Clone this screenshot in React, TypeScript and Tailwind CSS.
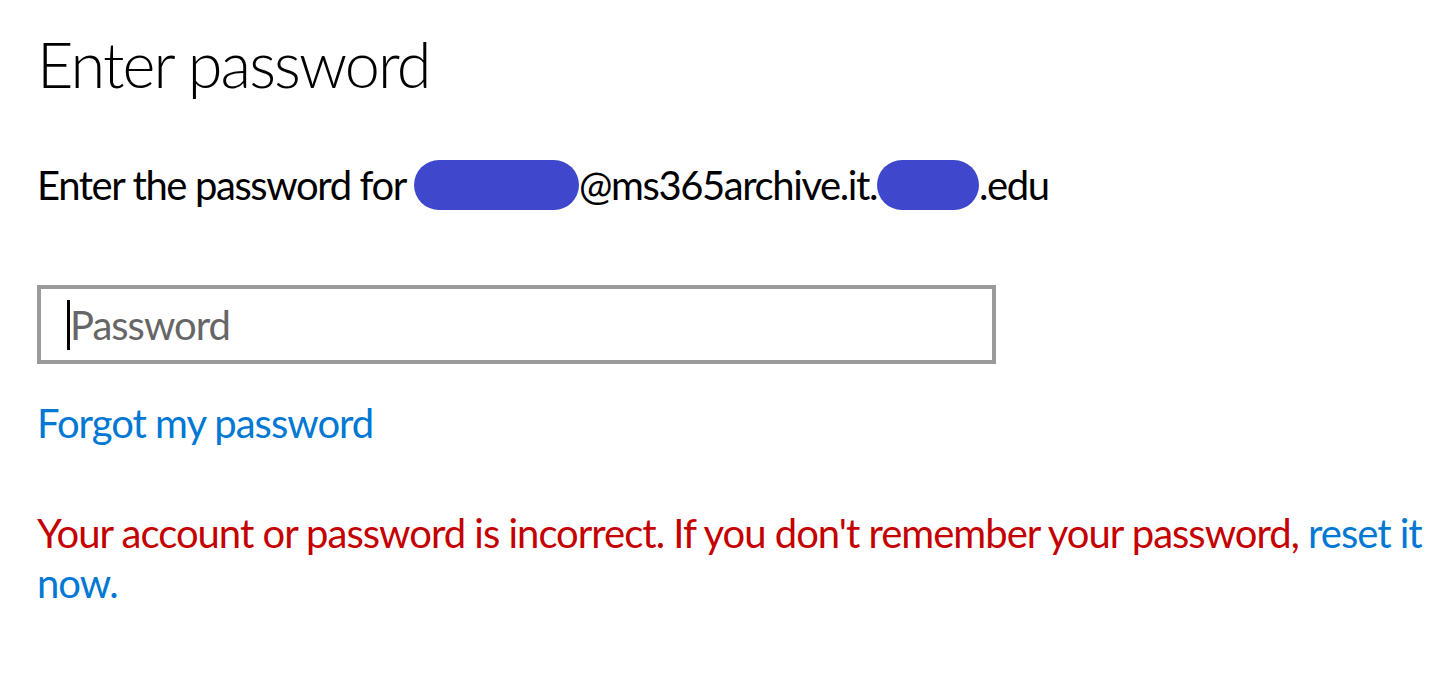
export default function App() {
  return (
    <div className="min-h-[680px] bg-white pl-[37px] pt-[24px] text-black" style={{ fontFamily: 'Lato, "Noto Sans", sans-serif' }}>
      <h1 className="text-[63px] font-light leading-[80px] tracking-[-0.03em]">Enter password</h1>

      <p className="mt-[56px] flex items-center text-[40px] leading-[50px] tracking-[-0.035em]">
        <span>Enter the password for&nbsp;</span>
        <span className="inline-block h-[50px] w-[165px] rounded-full bg-[#3f48cc]" />
        <span>@ms365archive.it.</span>
        <span className="inline-block h-[50px] w-[102px] rounded-full bg-[#3f48cc]" />
        <span>.edu</span>
      </p>

      <div className="mt-[75px] flex h-[79px] w-[959px] items-center border-4 border-[#9a9a9a] pl-[26px]">
        <span className="h-[50px] w-[3px] bg-black" />
        <span className="text-[40px] tracking-[-0.025em] text-[#666666]">Password</span>
      </div>

      <a className="mt-[34px] block text-[40px] leading-[50px] tracking-[-0.025em] text-[#0078d4]">Forgot my password</a>

      <p className="mt-[60px] text-[40px] leading-[50px] tracking-[-0.025em] text-[#c40000]">
        Your account or password is incorrect. If you don't remember your password,{' '}
        <a className="text-[#0078d4]">reset it now.</a>
      </p>
    </div>
  );
}
